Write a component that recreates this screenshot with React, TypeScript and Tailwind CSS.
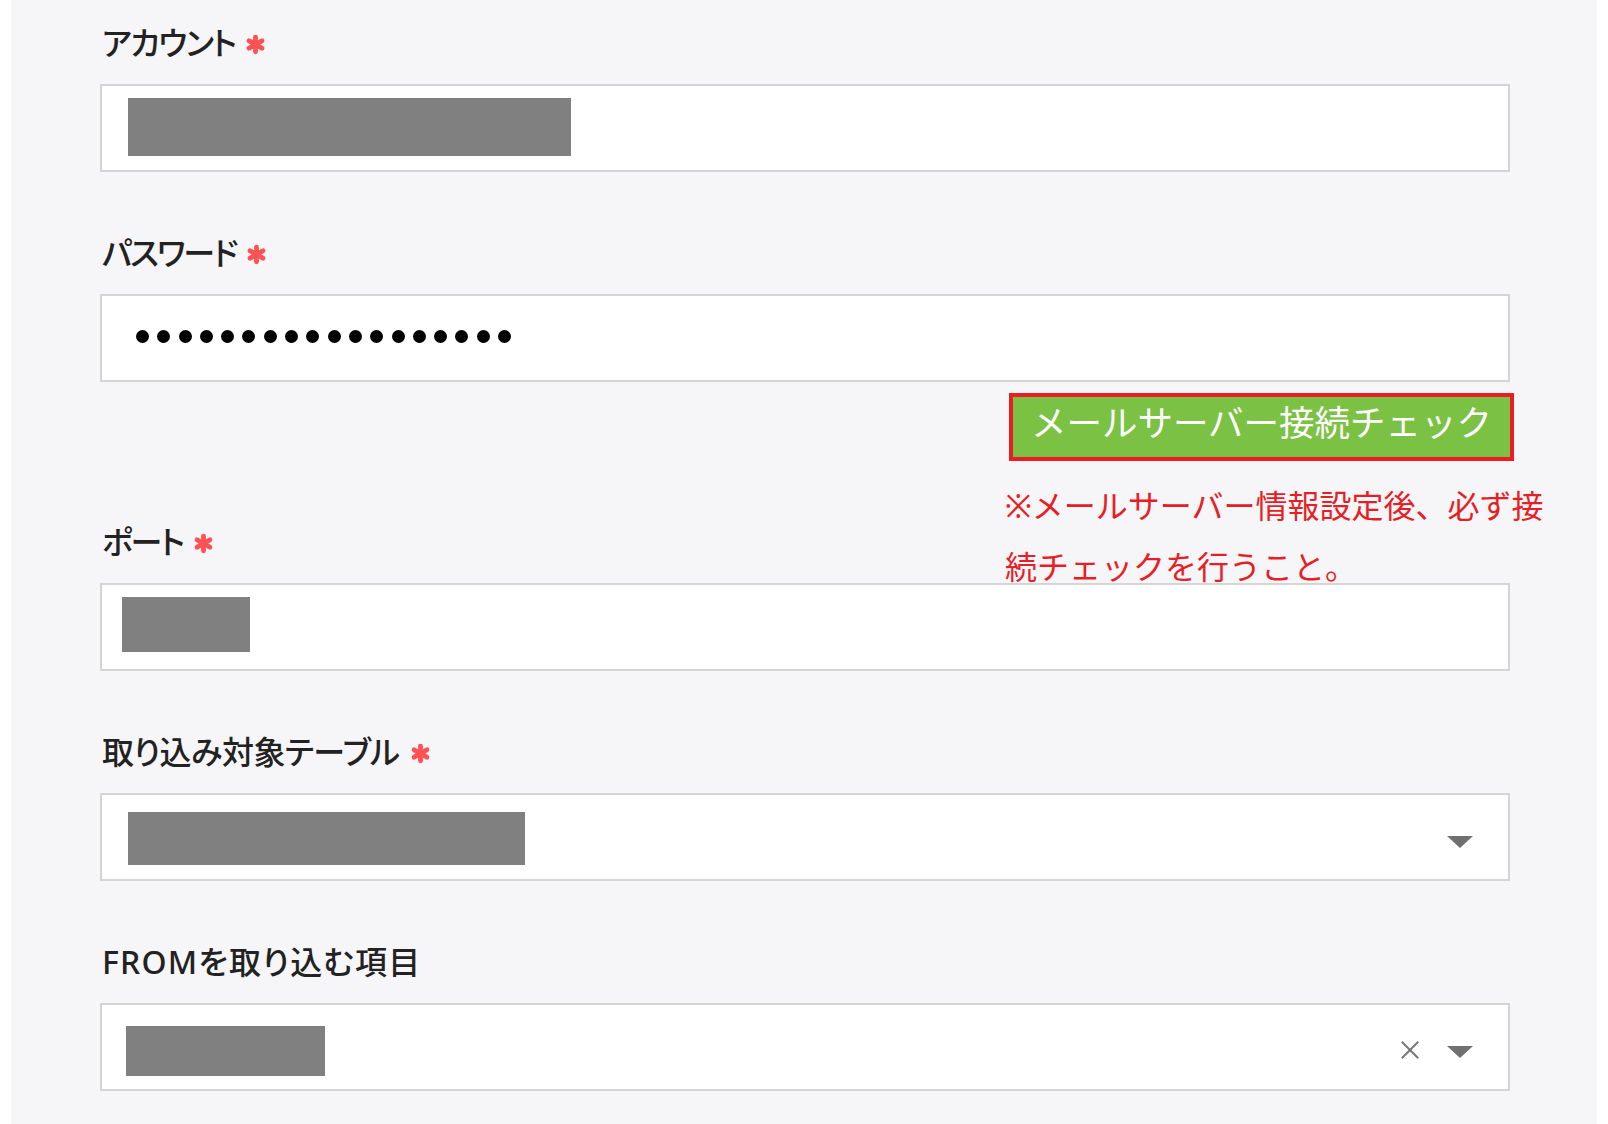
import React from 'react';

// Form field label with optional required mark
function FieldLabel({
  text,
  required,
  className = '',
}: {
  text: string;
  required?: boolean;
  className?: string;
}) {
  return (
    <div className="flex h-[40px] items-center">
      <span
        className={`ml-[2px] text-[32px] font-medium leading-none text-[#222222] [font-feature-settings:'palt'] ${className}`}
      >
        {text}
      </span>
      {required && (
        <svg width="21" height="21" viewBox="0 0 20 20" className="ml-[10px] mt-[2px]">
          <g stroke="#ff5252" strokeWidth="4.6" strokeLinecap="round">
            <line x1="10" y1="3" x2="10" y2="17" />
            <line x1="3.9" y1="6.5" x2="16.1" y2="13.5" />
            <line x1="3.9" y1="13.5" x2="16.1" y2="6.5" />
          </g>
        </svg>
      )}
    </div>
  );
}

function Caret() {
  return (
    <svg width="26" height="12" viewBox="0 0 26 12" className="mt-[10px]">
      <polygon points="0,0 26,0 13,12" fill="#707070" />
    </svg>
  );
}

function ClearIcon() {
  return (
    <svg width="18" height="18" viewBox="0 0 18 18" className="mt-[6px]">
      <g stroke="#777777" strokeWidth="2" strokeLinecap="square">
        <line x1="1.5" y1="1.5" x2="16.5" y2="16.5" />
        <line x1="16.5" y1="1.5" x2="1.5" y2="16.5" />
      </g>
    </svg>
  );
}

// Redacted value block
function Masked({ className }: { className: string }) {
  return <div className={`bg-[#808080] ${className}`} />;
}

function InputBox({ children }: { children?: React.ReactNode }) {
  return (
    <div className="mt-[21px] flex h-[88px] w-[1410px] items-center border-2 border-[#d4d4d4] bg-white">
      {children}
    </div>
  );
}

export default function App() {
  const dots = Array.from({ length: 18 });

  return (
    <div className="flex h-[1124px] w-full bg-white font-['Noto_Sans','Noto_Sans_CJK_JP',sans-serif]">
      <div className="ml-[11px] h-full w-[1586px] bg-[#f6f6f8] pl-[89px] pt-[23px]">
        {/* Account */}
        <FieldLabel text="アカウント" required className="tracking-[-1.6px]" />
        <InputBox>
          <Masked className="ml-[26px] mt-[-2px] h-[58px] w-[443px]" />
        </InputBox>

        {/* Password */}
        <div className="mt-[61px]">
          <FieldLabel text="パスワード" required className="tracking-[-2px]" />
          <InputBox>
            <div className="ml-[34px] mt-[-4px] flex gap-[8.3px]">
              {dots.map((_, i) => (
                <div key={i} className="h-[13px] w-[13px] rounded-full bg-black" />
              ))}
            </div>
          </InputBox>
        </div>

        {/* Connection check */}
        <div className="flex w-[1414px] justify-end">
          <div className="relative mt-[11px]">
            <button
              type="button"
              className="flex h-[68px] w-[505px] items-center justify-center border-4 border-[#ec1c24] bg-[#7bc143] pb-[8px] text-[35.5px] font-normal leading-none text-white"
            >
              メールサーバー接続チェック
            </button>
            <p className="absolute left-[-4px] top-[82px] whitespace-nowrap text-[32px] leading-[61px] text-[#e61f26]">
              ※メールサーバー情報設定後、必ず接
              <br />
              続チェックを行うこと。
            </p>
          </div>
        </div>

        {/* Port */}
        <div className="mt-[61px]">
          <FieldLabel text="ポート" required className="tracking-[-2px]" />
          <InputBox>
            <Masked className="ml-[20px] mt-[-6px] h-[55px] w-[128px]" />
          </InputBox>
        </div>

        {/* Target table */}
        <div className="mt-[61px]">
          <FieldLabel text="取り込み対象テーブル" required className="tracking-[-0.5px]" />
          <InputBox>
            <Masked className="ml-[26px] mt-[2px] h-[53px] w-[397px]" />
            <div className="ml-auto mr-[35px] flex items-center">
              <Caret />
            </div>
          </InputBox>
        </div>

        {/* FROM field */}
        <div className="mt-[61px]">
          <FieldLabel text="FROMを取り込む項目" className="tracking-[1.2px]" />
          <InputBox>
            <Masked className="ml-[24px] mt-[8px] h-[50px] w-[199px]" />
            <div className="ml-auto mr-[35px] flex items-center gap-[28px]">
              <ClearIcon />
              <Caret />
            </div>
          </InputBox>
        </div>
      </div>
    </div>
  );
}
